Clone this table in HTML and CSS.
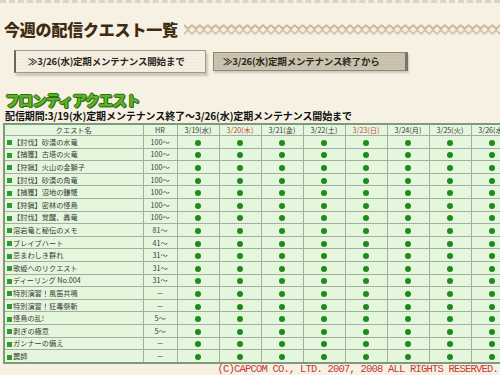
FILE: index.html
```html
<!DOCTYPE html>
<html lang="ja">
<head>
<meta charset="utf-8">
<link rel="stylesheet" href="styles.css">
</head>
<body>
<div class="page">
  <div class="topstrip"></div>
  <div class="title-row">
    <h1 class="title">今週の配信クエスト一覧</h1>
    <svg class="zigzag" width="320" height="11" viewBox="0 0 320 11" preserveAspectRatio="none">
      <defs>
        <pattern id="zz" width="8" height="11" patternUnits="userSpaceOnUse">
          <path d="M0 1 L4 5 L8 1" fill="none" stroke="#c6b593" stroke-width="1.8"/>
          <path d="M0 10 L4 6 L8 10" fill="none" stroke="#d2c3a5" stroke-width="1.8"/>
        </pattern>
      </defs>
      <rect width="320" height="11" fill="url(#zz)"/>
    </svg>
  </div>
  <div class="tabs">
    <div class="tab tab-on">≫3/26(水)定期メンテナンス開始まで</div>
    <div class="tab tab-off">≫3/26(水)定期メンテナンス終了から</div>
  </div>
  <h2 class="section">フロンティアクエスト</h2>
  <p class="period">配信期間:3/19(水)定期メンテナンス終了～3/26(水)定期メンテナンス開始まで</p>
  <table class="quests">
    <colgroup>
      <col class="c-name"><col class="c-hr">
      <col class="c-day"><col class="c-day"><col class="c-day"><col class="c-day">
      <col class="c-day"><col class="c-day"><col class="c-day"><col class="c-day">
    </colgroup>
    <thead>
      <tr>
        <th>クエスト名</th><th>HR</th>
        <th>3/19(水)</th><th class="red">3/20(木)</th><th>3/21(金)</th><th>3/22(土)</th>
        <th class="red">3/23(日)</th><th>3/24(月)</th><th>3/25(火)</th><th>3/26(水)</th>
      </tr>
    </thead>
    <tbody>
      <tr><td class="name">【討伐】砂漠の水竜</td><td>100～</td><td><i></i></td><td><i></i></td><td><i></i></td><td><i></i></td><td><i></i></td><td><i></i></td><td><i></i></td><td><i></i></td></tr>
      <tr><td class="name">【捕獲】古塔の火竜</td><td>100～</td><td><i></i></td><td><i></i></td><td><i></i></td><td><i></i></td><td><i></i></td><td><i></i></td><td><i></i></td><td><i></i></td></tr>
      <tr><td class="name">【狩猟】火山の金獅子</td><td>100～</td><td><i></i></td><td><i></i></td><td><i></i></td><td><i></i></td><td><i></i></td><td><i></i></td><td><i></i></td><td><i></i></td></tr>
      <tr><td class="name">【討伐】砂漠の角竜</td><td>100～</td><td><i></i></td><td><i></i></td><td><i></i></td><td><i></i></td><td><i></i></td><td><i></i></td><td><i></i></td><td><i></i></td></tr>
      <tr><td class="name">【捕獲】沼地の鎌蟹</td><td>100～</td><td><i></i></td><td><i></i></td><td><i></i></td><td><i></i></td><td><i></i></td><td><i></i></td><td><i></i></td><td><i></i></td></tr>
      <tr><td class="name">【狩猟】密林の怪鳥</td><td>100～</td><td><i></i></td><td><i></i></td><td><i></i></td><td><i></i></td><td><i></i></td><td><i></i></td><td><i></i></td><td><i></i></td></tr>
      <tr><td class="name">【討伐】覚醒、轟竜</td><td>100～</td><td><i></i></td><td><i></i></td><td><i></i></td><td><i></i></td><td><i></i></td><td><i></i></td><td><i></i></td><td><i></i></td></tr>
      <tr><td class="name">溶岩竜と秘伝のメモ</td><td>81～</td><td><i></i></td><td><i></i></td><td><i></i></td><td><i></i></td><td><i></i></td><td><i></i></td><td><i></i></td><td><i></i></td></tr>
      <tr><td class="name">ブレイブハート</td><td>41～</td><td><i></i></td><td><i></i></td><td><i></i></td><td><i></i></td><td><i></i></td><td><i></i></td><td><i></i></td><td><i></i></td></tr>
      <tr><td class="name">忌まわしき群れ</td><td>31～</td><td><i></i></td><td><i></i></td><td><i></i></td><td><i></i></td><td><i></i></td><td><i></i></td><td><i></i></td><td><i></i></td></tr>
      <tr><td class="name">歌姫へのリクエスト</td><td>31～</td><td><i></i></td><td><i></i></td><td><i></i></td><td><i></i></td><td><i></i></td><td><i></i></td><td><i></i></td><td><i></i></td></tr>
      <tr><td class="name">ディーリング No.004</td><td>31～</td><td><i></i></td><td><i></i></td><td><i></i></td><td><i></i></td><td><i></i></td><td><i></i></td><td><i></i></td><td><i></i></td></tr>
      <tr><td class="name">特別演習！風笛共鳴</td><td>－</td><td><i></i></td><td><i></i></td><td><i></i></td><td><i></i></td><td><i></i></td><td><i></i></td><td><i></i></td><td><i></i></td></tr>
      <tr><td class="name">特別演習！狂毒祭斬</td><td>－</td><td><i></i></td><td><i></i></td><td><i></i></td><td><i></i></td><td><i></i></td><td><i></i></td><td><i></i></td><td><i></i></td></tr>
      <tr><td class="name">怪鳥の乱!</td><td>5～</td><td><i></i></td><td><i></i></td><td><i></i></td><td><i></i></td><td><i></i></td><td><i></i></td><td><i></i></td><td><i></i></td></tr>
      <tr><td class="name">剥ぎの極意</td><td>5～</td><td><i></i></td><td><i></i></td><td><i></i></td><td><i></i></td><td><i></i></td><td><i></i></td><td><i></i></td><td><i></i></td></tr>
      <tr><td class="name">ガンナーの備え</td><td>－</td><td><i></i></td><td><i></i></td><td><i></i></td><td><i></i></td><td><i></i></td><td><i></i></td><td><i></i></td><td><i></i></td></tr>
      <tr><td class="name">罠師</td><td>－</td><td><i></i></td><td><i></i></td><td><i></i></td><td><i></i></td><td><i></i></td><td><i></i></td><td><i></i></td><td><i></i></td></tr>
    </tbody>
  </table>
  <p class="copy">(C)CAPCOM CO., LTD. 2007, 2008 ALL RIGHTS RESERVED.</p>
</div>
</body>
</html>
```

FILE: styles.css
```css
html, body {
  margin: 0;
  padding: 0;
  width: 500px;
  height: 375px;
  overflow: hidden;
  background: #f6f1e3;
}

.page {
  width: 500px;
  height: 375px;
  overflow: hidden;
  font-family: "Noto Sans CJK JP", "Noto Sans", sans-serif;
  color: #333;
}

.topstrip {
  height: 0;
  border-top: 3px dashed #ddd5c3;
}

.title-row {
  display: flex;
  align-items: center;
  gap: 6px;
  height: 20px;
  margin-top: 16px;
  padding-left: 4px;
}

.title {
  margin: 0;
  font-size: 16px;
  line-height: 20px;
  font-weight: 900;
  color: #3e2c12;
  letter-spacing: -0.2px;
  white-space: nowrap;
}

.zigzag {
  flex: 1;
  height: 11px;
}

.tabs {
  display: flex;
  align-items: flex-start;
  gap: 7px;
  margin-top: 11px;
  padding-left: 14px;
  height: 41px;
}

.tab {
  font-size: 9.5px;
  font-weight: 700;
  color: #2c2618;
  white-space: nowrap;
  letter-spacing: -0.2px;
}

.tab-on {
  width: 177px;
  height: 21px;
  line-height: 21px;
  padding-left: 12px;
  background: repeating-linear-gradient(180deg, #f4efe3 0, #f4efe3 2px, #ebe5d6 3px);
  border: 1px solid #a49a84;
  border-left: 2px solid #6f6656;
  box-shadow: 2px 3px 2px rgba(90, 75, 50, 0.25);
}

.tab-off {
  width: 182px;
  height: 17px;
  line-height: 17px;
  margin-top: 2px;
  padding-left: 9px;
  background: repeating-linear-gradient(180deg, #cbc3b0 0, #cbc3b0 2px, #c2b9a5 3px);
  border: 1px solid #8e8672;
  border-right: 3px solid #7a7262;
  box-shadow: 1px 2px 2px rgba(90, 75, 50, 0.25);
}

.section {
  margin: 0;
  padding-left: 5px;
  height: 18px;
  font-size: 14.5px;
  line-height: 18px;
  font-weight: 900;
  color: #5cb326;
  letter-spacing: -0.9px;
  text-shadow: 1px 0 0 #2f6d12, -1px 0 0 #2f6d12, 0 1px 0 #2f6d12, 0 -1px 0 #2f6d12, 1px 1px 0 #2f6d12;
}

.period {
  margin: 0;
  padding-left: 5px;
  height: 13px;
  font-size: 10px;
  line-height: 13px;
  font-weight: 700;
  color: #111;
  white-space: nowrap;
  letter-spacing: -0.1px;
}

.quests {
  margin: 1px 0 0 3px;
  border-collapse: collapse;
  table-layout: fixed;
  width: 509px;
  height: 241px;
  border: 2px solid #7e9a7c;
  background: #e4f7dd;
  font-size: 7.2px;
  color: #3a3a3a;
}

.c-name { width: 139px; }
.c-hr { width: 34px; }
.c-day { width: 42px; }

.quests th,
.quests td {
  border: 1px solid #a3ada2;
  padding: 0;
  line-height: 10px;
  text-align: center;
  font-weight: 400;
  white-space: nowrap;
  overflow: hidden;
}

.quests th.red { color: #d04848; }

.quests td.name {
  text-align: left;
  padding-left: 2px;
}

.quests td.name::before {
  content: "";
  display: inline-block;
  width: 5px;
  height: 5px;
  margin-right: 1px;
  background: #2f9a2f;
  vertical-align: -0.5px;
}

.quests i {
  display: inline-block;
  width: 6px;
  height: 6px;
  border-radius: 50%;
  background: #1f8a1c;
  vertical-align: middle;
}

.copy {
  margin: 0;
  padding-right: 2px;
  text-align: right;
  font-family: "Liberation Mono", "DejaVu Sans Mono", monospace;
  font-size: 10.5px;
  letter-spacing: -0.8px;
  line-height: 11px;
  color: #c43a36;
  white-space: nowrap;
}
```
